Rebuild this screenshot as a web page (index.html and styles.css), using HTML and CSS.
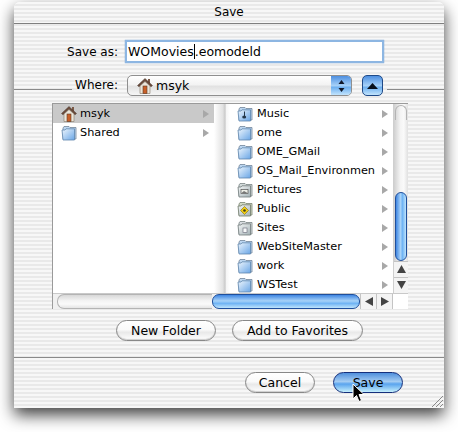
FILE: index.html
```html
<!DOCTYPE html>
<html>
    <head>
        <title>Save</title>
        <link rel="stylesheet" href="styles.css">
    </head>
    <body>
        <svg class="defs" width="0" height="0">
            <defs>
                <linearGradient id="folder_grad" x1="0" y1="0" x2="1" y2="1">
                    <stop offset="0" stop-color="#eef6fd"/>
                    <stop offset="1" stop-color="#6aa6e6"/>
                </linearGradient>
                <linearGradient id="grey_grad" x1="0" y1="0" x2="1" y2="1">
                    <stop offset="0" stop-color="#f4f6f6"/>
                    <stop offset="1" stop-color="#a4b2b6"/>
                </linearGradient>
                <symbol id="i_folder" viewBox="0 0 16 16">
                    <path d="M2 3 L3 1.5 H8 L9 2.5 H15 V14 H2 Z" fill="#bcd6f0" stroke="#74879b" stroke-width=".8"/>
                    <path d="M1 5 H4 L5 3.8 H13.5 V15 H2 Z" fill="url(#folder_grad)" stroke="#5f86ad" stroke-width=".8"/>
                </symbol>
                <symbol id="i_pictures" viewBox="0 0 16 16">
                    <path d="M2 3 L3 1.5 H8 L9 2.5 H15 V14 H2 Z" fill="#d2dada" stroke="#7b8585" stroke-width=".8"/>
                    <path d="M1 5 H4 L5 3.8 H13.5 V15 H2 Z" fill="url(#grey_grad)" stroke="#717b7b" stroke-width=".8"/>
                    <rect x="4" y="7.5" width="7" height="4" fill="#eef0e8" stroke="#555" stroke-width=".7"/>
                    <path d="M4.5 11 L7 9 L10.5 11 Z" fill="#777"/>
                </symbol>
                <symbol id="i_public" viewBox="0 0 16 16">
                    <path d="M2 3 L3 1.5 H8 L9 2.5 H15 V14 H2 Z" fill="#d2dac4" stroke="#7b8575" stroke-width=".8"/>
                    <path d="M1 5 H4 L5 3.8 H13.5 V15 H2 Z" fill="url(#grey_grad)" stroke="#717b6b" stroke-width=".8"/>
                    <path d="M7.5 5.5 L11.5 9.5 L7.5 13.5 L3.5 9.5 Z" fill="#f4d010" stroke="#7d6a10" stroke-width=".6"/>
                    <circle cx="7.5" cy="9.5" r="1.3" fill="#3d3a20"/>
                </symbol>
                <symbol id="i_sites" viewBox="0 0 16 16">
                    <path d="M2 3 L3 1.5 H8 L9 2.5 H15 V14 H2 Z" fill="#d8dcE0" stroke="#7b8585" stroke-width=".8"/>
                    <path d="M1 5 H4 L5 3.8 H13.5 V15 H2 Z" fill="url(#grey_grad)" stroke="#717b7b" stroke-width=".8"/>
                    <rect x="6" y="8" width="4" height="4.5" fill="#f6f8f8" stroke="#667" stroke-width=".6"/>
                </symbol>
                <symbol id="i_music" viewBox="0 0 16 16">
                    <path d="M2 3 L3 1.5 H8 L9 2.5 H15 V14 H2 Z" fill="#bcd6f0" stroke="#74879b" stroke-width=".8"/>
                    <path d="M1 5 H4 L5 3.8 H13.5 V15 H2 Z" fill="url(#folder_grad)" stroke="#5f86ad" stroke-width=".8"/>
                    <path d="M7.5 5.5 V11" stroke="#25384a" stroke-width="1"/>
                    <ellipse cx="7.2" cy="11" rx="2" ry="1.5" fill="#25384a"/>
                </symbol>
                <symbol id="i_home" viewBox="0 0 16 16">
                    <rect x="11" y="1" width="2" height="4" fill="#7d5b48"/>
                    <path d="M8 .5 L15.5 7.5 L14 8.8 L8 3.4 L2 8.8 L.5 7.5 Z" fill="#6c4c3c" stroke="#47362c" stroke-width=".5"/>
                    <path d="M3 8 L8 3.6 L13 8 V15.5 H3 Z" fill="#ece6da" stroke="#85786a" stroke-width=".6"/>
                    <rect x="6" y="8" width="4" height="7.5" fill="#c85f28" stroke="#5e3a22" stroke-width=".6"/>
                </symbol>
            </defs>
        </svg>
        <div class="window">
            <div class="titlebar">Save</div>
            <div class="save_row">
                <label class="form_label">Save as:</label>
                <div class="name_field">WOMovies<span class="caret"></span>.eomodeld</div>
            </div>
            <div class="where_row">
                <div class="line line_left"></div>
                <label class="where_label">Where:</label>
                <div class="popup">
                    <svg class="icon"><use href="#i_home"/></svg>
                    <span class="popup_text">msyk</span>
                    <div class="popup_arrows">
                        <svg width="7" height="14" viewBox="0 0 7 14"><path d="M3.5 1 L6.5 5 H.5 Z M3.5 13 L.5 9 H6.5 Z" fill="#10182a"/></svg>
                    </div>
                </div>
                <div class="disclose">
                    <svg width="11" height="6" viewBox="0 0 11 6"><path d="M5.5 0 L11 6 H0 Z" fill="#08101c"/></svg>
                </div>
                <div class="line line_right"></div>
            </div>
            <div class="browser">
                <div class="panes">
                    <div class="pane pane_left">
                        <div class="row row_selected"><svg class="icon"><use href="#i_home"/></svg><span class="row_name">msyk</span><span class="tri"></span></div>
                        <div class="row"><svg class="icon"><use href="#i_folder"/></svg><span class="row_name">Shared</span><span class="tri"></span></div>
                    </div>
                    <div class="pane_gutter"></div>
                    <div class="pane pane_right">
                        <div class="row"><svg class="icon"><use href="#i_music"/></svg><span class="row_name">Music</span><span class="tri"></span></div>
                        <div class="row"><svg class="icon"><use href="#i_folder"/></svg><span class="row_name">ome</span><span class="tri"></span></div>
                        <div class="row"><svg class="icon"><use href="#i_folder"/></svg><span class="row_name">OME_GMail</span><span class="tri"></span></div>
                        <div class="row"><svg class="icon"><use href="#i_folder"/></svg><span class="row_name">OS_Mail_Environmen</span><span class="tri"></span></div>
                        <div class="row"><svg class="icon"><use href="#i_pictures"/></svg><span class="row_name">Pictures</span><span class="tri"></span></div>
                        <div class="row"><svg class="icon"><use href="#i_public"/></svg><span class="row_name">Public</span><span class="tri"></span></div>
                        <div class="row"><svg class="icon"><use href="#i_sites"/></svg><span class="row_name">Sites</span><span class="tri"></span></div>
                        <div class="row"><svg class="icon"><use href="#i_folder"/></svg><span class="row_name">WebSiteMaster</span><span class="tri"></span></div>
                        <div class="row"><svg class="icon"><use href="#i_folder"/></svg><span class="row_name">work</span><span class="tri"></span></div>
                        <div class="row"><svg class="icon"><use href="#i_folder"/></svg><span class="row_name">WSTest</span><span class="tri"></span></div>
                    </div>
                    <div class="vscroll">
                        <div class="vtrack"><div class="vcap"></div><div class="vthumb"></div></div>
                        <div class="sarrow"><svg width="9" height="8" viewBox="0 0 9 8"><path d="M4.5 0 L9 8 H0 Z" fill="#444"/></svg></div>
                        <div class="sarrow"><svg width="9" height="8" viewBox="0 0 9 8"><path d="M4.5 8 L0 0 H9 Z" fill="#444"/></svg></div>
                    </div>
                </div>
                <div class="hscroll">
                    <div class="htrack"><div class="hcap"></div><div class="hthumb"></div></div>
                    <div class="harrow"><svg width="8" height="9" viewBox="0 0 8 9"><path d="M0 4.5 L8 0 V9 Z" fill="#444"/></svg></div>
                    <div class="harrow"><svg width="8" height="9" viewBox="0 0 8 9"><path d="M8 4.5 L0 0 V9 Z" fill="#444"/></svg></div>
                    <div class="corner"></div>
                </div>
            </div>
            <div class="tools_row">
                <button class="btn btn_folder">New Folder</button>
                <button class="btn btn_fav">Add to Favorites</button>
            </div>
            <div class="separator"></div>
            <div class="actions_row">
                <button class="btn btn_action">Cancel</button>
                <button class="btn btn_action btn_default">Save</button>
            </div>
            <svg class="grip" width="13" height="13" viewBox="0 0 13 13"><path d="M1 12 L12 1 M5 12 L12 5 M9 12 L12 9" stroke="#8a8a8a" stroke-width="1"/></svg>
            <svg class="pointer" width="14" height="20" viewBox="0 0 14 20"><path d="M1 1 V16 L4.5 12.5 L7 18.5 L9.5 17.5 L7 11.5 H12 Z" fill="#000" stroke="#fff" stroke-width="1"/></svg>
        </div>
    </body>
</html>
```

FILE: styles.css
```css
html, body {
    margin: 0;
    padding: 0;
    background: #fff;
    overflow: hidden;
}
body {
    width: 458px;
    height: 432px;
    font-family: "DejaVu Sans", sans-serif;
    font-size: 12.5px;
    color: #000;
}
.defs {
    position: absolute;
}
.window {
    position: relative;
    width: 430px;
    height: 406px;
    margin: 2px 0 0 14px;
    border-radius: 6px 6px 0 0;
    background: repeating-linear-gradient(#f7f7f7 0, #f7f7f7 2px, #e9e9e9 2px, #e9e9e9 4px);
    box-shadow: 0 7px 16px rgba(0, 0, 0, 0.75);
}
.titlebar {
    height: 21px;
    line-height: 20px;
    text-align: center;
    font-size: 12px;
    border-bottom: 1px solid #7f7f7f;
}
.save_row {
    display: flex;
    align-items: center;
    gap: 7px;
    margin-top: 16px;
}
.form_label {
    width: 104px;
    text-align: right;
    font-size: 12px;
}
.name_field {
    box-sizing: border-box;
    width: 259px;
    height: 23px;
    line-height: 19px;
    padding-left: 1px;
    background: #fff;
    border: 2px solid #8db6e2;
    box-shadow: 0 0 1px #5d8fc8;
}
.caret {
    display: inline-block;
    width: 1px;
    height: 15px;
    margin-bottom: -3px;
    background: #000;
}
.where_row {
    display: flex;
    margin-top: 12px;
    height: 21px;
}
.line {
    height: 1px;
    margin-top: 14px;
    background: #8a8a8a;
}
.line_left {
    width: 58px;
}
.line_right {
    flex: 1;
    margin-left: 4px;
}
.where_label {
    width: 46px;
    text-align: right;
    line-height: 21px;
    font-size: 12px;
}
.popup {
    box-sizing: border-box;
    display: flex;
    align-items: center;
    width: 225px;
    margin-left: 9px;
    padding-left: 9px;
    border: 1px solid #8f8f8f;
    border-radius: 5px;
    background: linear-gradient(#fff, #f3f3f3 45%, #e2e2e2 55%, #f6f6f6);
    overflow: hidden;
}
.popup_text {
    flex: 1;
    margin-left: 3px;
}
.popup_arrows {
    display: flex;
    align-items: center;
    justify-content: center;
    width: 20px;
    height: 100%;
    background: linear-gradient(#4d8fe0, #a5d0f8 50%, #6fb0f0 60%, #c2e4fc);
}
.disclose {
    box-sizing: border-box;
    display: flex;
    align-items: center;
    justify-content: center;
    width: 21px;
    margin-left: 10px;
    border: 1px solid #1f4a88;
    border-radius: 5px;
    background: linear-gradient(#4d8fe0, #a5d0f8 50%, #6fb0f0 60%, #c2e4fc);
}
.icon {
    flex: none;
    width: 16px;
    height: 16px;
}
.browser {
    box-sizing: border-box;
    height: 206px;
    margin: 7px 36px 0 38px;
    border: 1px solid #9a9a9a;
    border-width: 1px 0 0 1px;
    display: flex;
    flex-direction: column;
}
.panes {
    flex: 1;
    display: flex;
    min-height: 0;
}
.pane {
    background: #fff;
    font-size: 11.3px;
}
.pane_left {
    width: 161px;
}
.pane_right {
    width: 163px;
}
.pane_gutter {
    width: 16px;
    background: linear-gradient(90deg, #fff, #e2e2e2 55%, #c8c8c8 70%, #f4f4f4 75%, #fff);
}
.row {
    box-sizing: border-box;
    display: flex;
    align-items: center;
    height: 19px;
    padding-left: 8px;
}
.pane_right .row {
    padding-left: 7px;
}
.row_selected {
    background: #c9c9c9;
}
.row_name {
    flex: 1;
    min-width: 0;
    margin-left: 3px;
    white-space: nowrap;
}
.pane_right .row_name {
    margin-left: 4px;
}
.tri {
    flex: none;
    width: 0;
    height: 0;
    margin: 0 5px 0 4px;
    border-left: 6px solid #a8a8a8;
    border-top: 4px solid transparent;
    border-bottom: 4px solid transparent;
}
.vscroll {
    flex: 1;
    display: flex;
    flex-direction: column;
    border-left: 1px solid #cfcfcf;
    background: #f0f0f0;
}
.vtrack {
    flex: 1;
    display: flex;
    flex-direction: column;
    justify-content: flex-end;
    position: relative;
    background: linear-gradient(90deg, #d0d0d0, #f4f4f4 45%, #fafafa 70%, #e0e0e0);
}
.vcap {
    position: absolute;
    top: 1px;
    left: 1px;
    right: 1px;
    height: 14px;
    border-radius: 7px 7px 0 0;
    border: 1px solid #b4b4b4;
    border-bottom: 0;
}
.vthumb {
    height: 67px;
    margin: 0 1px;
    border: 1px solid #1f4f9c;
    border-radius: 7px;
    background: linear-gradient(90deg, #3f86e2, #a7d2f8 45%, #70b4f4 65%, #bfe4fc);
}
.sarrow {
    display: flex;
    align-items: center;
    justify-content: center;
    height: 14px;
    padding-bottom: 1px;
    background: #f4f4f4;
    border-top: 1px solid #c4c4c4;
}
.hscroll {
    height: 15px;
    flex: none;
    display: flex;
    border-top: 1px solid #c9c9c9;
    background: #f0f0f0;
}
.htrack {
    width: 307px;
    display: flex;
}
.hcap {
    flex: 1;
    margin-left: 4px;
    border: 1px solid #b4b4b4;
    border-right: 0;
    border-radius: 7px 0 0 7px;
    background: linear-gradient(#d8d8d8, #f4f4f4 45%, #fafafa 70%, #e4e4e4);
}
.hthumb {
    box-sizing: border-box;
    width: 148px;
    height: 15px;
    border: 1px solid #1f4f9c;
    border-radius: 7px;
    background: linear-gradient(#3f86e2, #a7d2f8 45%, #70b4f4 65%, #bfe4fc);
}
.harrow {
    display: flex;
    align-items: center;
    justify-content: center;
    width: 15px;
    background: #f4f4f4;
    border-left: 1px solid #c4c4c4;
}
.corner {
    flex: 1;
    border-left: 1px solid #c4c4c4;
    background: #fff;
}
.tools_row {
    display: flex;
    gap: 16px;
    margin-top: 11px;
    padding-left: 102px;
}
.btn {
    box-sizing: border-box;
    height: 21px;
    padding: 0;
    font: inherit;
    color: #000;
    border: 1px solid #888;
    border-radius: 11px;
    background: linear-gradient(#fff, #fafafa 45%, #e9e9e9 60%, #fff);
    box-shadow: inset 0 -1px 1px #ccc;
}
.btn_folder {
    width: 100px;
}
.btn_fav {
    width: 131px;
}
.separator {
    height: 1px;
    margin-top: 16px;
    background: #8a8a8a;
}
.actions_row {
    display: flex;
    justify-content: flex-end;
    gap: 18px;
    margin-top: 14px;
    padding-right: 41px;
}
.btn_action {
    width: 70px;
}
.btn_default {
    border-color: #16307c;
    background: linear-gradient(#4f8fdc, #a4ccf2 45%, #5aa4ee 58%, #c6f0fc);
    box-shadow: none;
}
.grip {
    position: absolute;
    right: 0;
    bottom: 0;
}
.pointer {
    position: absolute;
    left: 338px;
    top: 381px;
}
```
